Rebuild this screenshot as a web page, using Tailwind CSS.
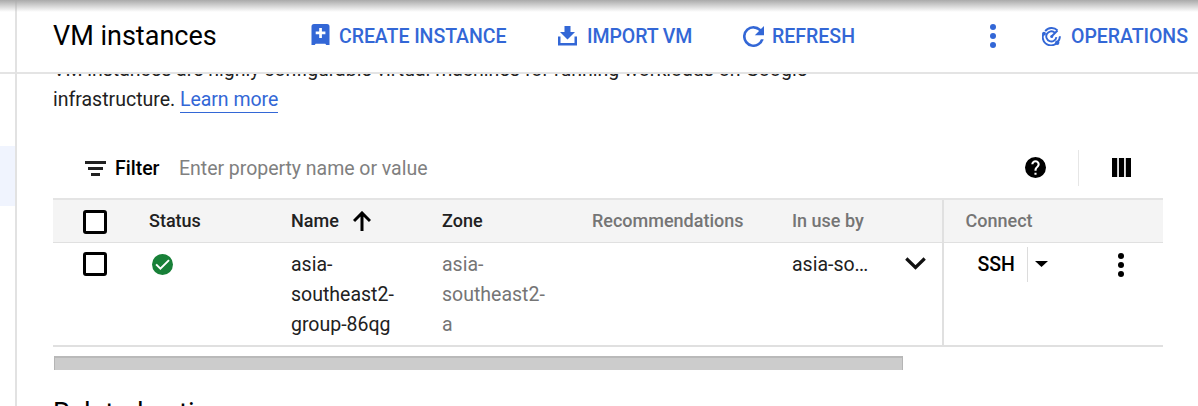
<!DOCTYPE html>
<html lang="en">
<head>
<meta charset="utf-8">
<title>VM instances</title>
<script src="https://cdn.jsdelivr.net/npm/@tailwindcss/browser@4"></script>
</head>
<body class="relative flex h-[406px] w-[1198px] overflow-hidden bg-white font-[Roboto,sans-serif] text-[19.5px] text-[#212121]">
<aside class="flex w-[17px] shrink-0 flex-col border-r-2 border-[#e2e2e2]">
  <div class="h-[74px] border-b-2 border-[#e4e4e4]"></div>
  <div class="mt-[72px] h-[60px] bg-[#f0f4fe]"></div>
</aside>
<main class="flex min-w-0 flex-1 flex-col">
  <header class="flex h-[74px] shrink-0 items-center whitespace-nowrap border-b-2 border-[#e4e4e4] pl-[36px] font-medium text-[#3367d6]">
    <h1 class="w-[258px] text-[27px] font-normal leading-9 text-black">VM instances</h1>
    <div class="flex w-[247px] items-center">
      <svg class="mb-[3px] mr-[9px] h-[21px] w-[19px]" viewBox="0 0 19 21" fill="currentColor"><path fill-rule="evenodd" d="M3 0h13a2.500 2.500 0 0 1 2.500 2.500V21h-3.200l-1-1.200h-9.600L3.700 21H.5V2.500A2.500 2.500 0 0 1 3 0ZM8.200 4v3.600H4.700v2.600h3.500v3.800h2.700v-3.800h3.500V7.600h-3.500V4Z"/></svg>
      <span class="pt-[2px] tracking-[-0.05px]">CREATE INSTANCE</span>
    </div>
    <div class="flex w-[185px] items-center">
      <svg class="mr-[10px] h-[20px] w-[19px]" viewBox="0 0 19 20" fill="currentColor"><path d="M6.500 0h6v6H17l-7.500 7.500L2 6h4.500ZM0 10.500h2.500v6.500h14v-6.500H19v9H0Z"/></svg>
      <span class="pt-[2px] tracking-[-0.08px]">IMPORT VM</span>
    </div>
    <div class="flex w-[247px] items-center">
      <svg class="mr-[8px] h-[21px] w-[21px]" viewBox="4 4 16 16" fill="currentColor"><path d="M17.650 6.350A7.960 7.960 0 0 0 12 4a8 8 0 1 0 7.730 10h-2.080A6 6 0 1 1 12 6c1.660 0 3.140.69 4.220 1.780L13 11h7V4z"/></svg>
      <span class="pt-[2px]">REFRESH</span>
    </div>
    <svg class="mr-[46px] h-[24px] w-[6px]" viewBox="0 0 6 24" fill="currentColor"><circle cx="3" cy="3" r="3"/><circle cx="3" cy="12" r="3"/><circle cx="3" cy="21" r="3"/></svg>
    <svg class="mr-[10px] h-[19px] w-[19px] shrink-0" viewBox="0 0 19 19" fill="none" stroke="currentColor" stroke-width="1.900"><path d="M2.200 5.500A8.200 8.200 0 0 0 14.500 16.200M3.200 4.200A8.300 8.300 0 0 1 15.500 3.400M17.900 9.300a8.400 8.400 0 0 1-2.900 6.400M12.800 5.600A5.100 5.100 0 1 0 14.400 10.200M9.500 9.500l6-6"/><circle cx="9.700" cy="9.500" r="1.500" fill="currentColor" stroke="none"/><circle cx="2" cy="6.700" r="1.900" fill="currentColor" stroke="none"/><circle cx="15.200" cy="15.700" r="2.200" fill="currentColor" stroke="none"/></svg>
    <span class="pt-[2px] tracking-[-0.05px]">OPERATIONS</span>
  </header>
  <section class="flex flex-1 flex-col overflow-hidden pl-[36px]">
    <p class="-mt-[19px] h-[59px] whitespace-nowrap leading-[30px]">VM instances are highly configurable virtual machines for running workloads on Google<br>infrastructure. <a class="inline-block h-[28px] border-b border-[#3367d6] tracking-[-0.05px] text-[#3367d6]">Learn more</a></p>
    <div class="mt-[36px] flex h-[36px] items-center pl-[32px]">
      <svg class="mr-[9px] h-[15px] w-[21px]" viewBox="0 0 21 15" fill="#212121"><path d="M0 0h21v3H0zM3 6h15v3H3zM6 12h9v3H6z"/></svg>
      <span class="w-[64px] pt-[2px] font-medium text-black">Filter</span>
      <span class="flex-1 pt-[2px] tracking-[-0.03px] text-[#808080]">Enter property name or value</span>
      <svg class="mb-[1px] mr-[32px] h-[21px] w-[21px]" viewBox="2 2 20 20"><path d="M12 2a10 10 0 1 0 0 20 10 10 0 0 0 0-20zm1 17h-2v-2h2zm2.070-7.750-.9.920C13.450 12.900 13 13.500 13 15h-2v-.5c0-1.100.45-2.100 1.170-2.830l1.240-1.260c.37-.36.59-.86.59-1.410a2 2 0 0 0-4 0H8a4 4 0 0 1 8 0c0 .88-.36 1.680-.93 2.250z"/></svg>
      <div class="mr-[33px] h-[36px] w-px bg-[#e6e6e6]"></div>
      <svg class="mb-[1px] mr-[67px] h-[19px] w-[19px]" viewBox="0 0 19 19"><path d="M0 0h5.200v19H0zM6.900 0h5.200v19H6.900zM13.800 0H19v19h-5.200z"/></svg>
    </div>
    <div class="mt-[12px] h-[149px] w-[1110px] shrink-0 border-b-2 border-[#e0e0e0]">
      <div class="flex h-[45px] items-stretch border-b border-t-2 border-b-[#e0e0e0] border-t-[#e4e4e4] bg-[#f4f4f4] text-[18px] font-medium text-[#212121]">
        <div class="flex w-[96px] items-center pl-[30px]"><span class="mt-[1px] h-[24px] w-[24px] rounded-[3px] border-3 border-black bg-white"></span></div>
        <div class="flex w-[142px] items-center pb-[2px]">Status</div>
        <div class="flex w-[151px] items-center pb-[2px]">Name<svg class="ml-[14px] mt-[2px] h-[20px] w-[18px]" viewBox="0 0 18 20" fill="none" stroke="#000" stroke-width="3"><path d="M9 20V2.500M1 10l8-8 8 8"/></svg></div>
        <div class="flex w-[150px] items-center pb-[2px]">Zone</div>
        <div class="flex w-[200px] items-center pb-[2px] text-[#757575]">Recommendations</div>
        <div class="flex w-[152px] items-center border-r-2 border-[#e0e0e0] pb-[2px] text-[#757575]">In use by</div>
        <div class="flex flex-1 items-center pb-[2px] pl-[21.500px] text-[#757575]">Connect</div>
      </div>
      <div class="flex h-[102px] leading-[30px]">
        <div class="w-[96px] pl-[30px] pt-[9px]"><div class="h-[24px] w-[24px] rounded-[3px] border-3 border-black"></div></div>
        <div class="w-[142px] pl-[3px] pt-[11px]"><svg class="h-[21px] w-[21px]" viewBox="2 2 20 20"><circle cx="12" cy="12" r="10" fill="#188038"/><path d="m5.900 11.900 4.100 4.100 8.200-8.200" fill="none" stroke="#fff" stroke-width="1.900"/></svg></div>
        <div class="w-[151px] pt-[7px]">asia-<br>southeast2-<br>group-86qg</div>
        <div class="w-[150px] pt-[7px] text-[#757575]">asia-<br>southeast2-<br>a</div>
        <div class="w-[200px]"></div>
        <div class="flex w-[152px] border-r-2 border-[#e0e0e0] pt-[7px]"><span class="w-[113px]">asia-so<span class="tracking-[-0.8px]">...</span></span><svg class="mt-[7px] h-[13px] w-[21px]" viewBox="0 0 21 13" fill="none" stroke="#111" stroke-width="3.200"><path d="m1.300 1.500 9.200 9 9.200-9"/></svg></div>
        <div class="flex flex-1 items-start pl-[33.500px] pt-[4px]">
          <span class="w-[49.500px] pt-[3px] font-medium text-black">SSH</span>
          <div class="h-[35px] w-px bg-[#dcdcdc]"></div>
          <svg class="ml-[7px] mt-[14px] h-[6px] w-[13px]" viewBox="0 0 13 6"><path d="M0 0h13L6.500 6z"/></svg>
          <svg class="ml-[70px] mt-[6px] h-[24px] w-[6px]" viewBox="0 0 6 24"><circle cx="3" cy="3" r="3"/><circle cx="3" cy="12" r="3"/><circle cx="3" cy="21" r="3"/></svg>
        </div>
      </div>
    </div>
    <div class="ml-px mt-[9px] h-[14px] w-[849px] shrink-0 border-x border-t-2 border-x-[#b5b5b5] border-t-[#b9b9b9] bg-[#cccccc]"></div>
    <h2 class="mt-[25px] shrink-0 text-[27px] font-normal leading-9 text-black">Related actions</h2>
  </section>
</main>
<div class="pointer-events-none absolute inset-x-0 top-0 h-[12px] bg-linear-to-b from-[#aaaaaa] to-transparent"></div>
</body>
</html>
